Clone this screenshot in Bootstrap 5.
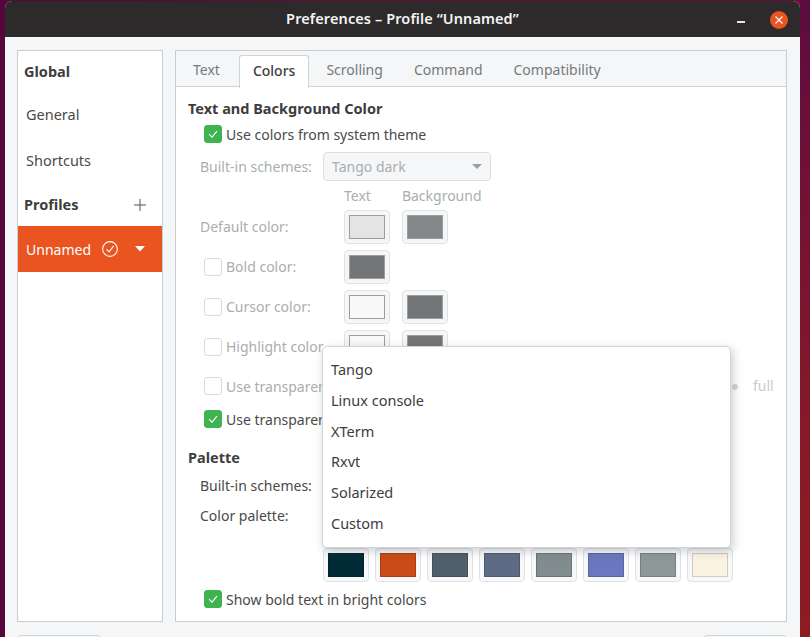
<!DOCTYPE html>
<html lang="en"><head><meta charset="utf-8"><title>Preferences</title>
<link rel="stylesheet" href="https://cdn.jsdelivr.net/npm/bootstrap@5.3.0/dist/css/bootstrap.min.css">
<style>
html,body{height:100%}
body{margin:0;width:810px;height:637px;overflow:hidden;font-family:"Noto Sans","Open Sans",sans-serif;font-size:14px;color:#3d3d3d;background:linear-gradient(90deg,#57063c 0,#57063c 5px,#6a0f38 800px,#7a1430 810px);padding:1px 10px 0 5px}
.rightglow{background:linear-gradient(180deg,#5c0b3f 0,#6e1136 25%,#861a28 70%,#8d1c22 100%);width:10px;height:637px;position:fixed;right:0;top:0}
.win{width:795px;height:700px;background:#f5f6f7;border-radius:7px 7px 0 0;overflow:hidden}
.ttl{height:36px;background:#2c2a2b;color:#f4f4f4;font-weight:600;font-size:14.5px;letter-spacing:.1px}
.ttltxt{width:100%;text-align:center}
.winbtns{position:absolute;right:12px;top:10px}
.closeb{width:18px;height:18px;border-radius:50%;background:#e95420}
.minb{width:8px;height:1.5px;background:#e8e8e8;margin:4px 25px 0 0}
.mainarea{padding:13px 13px 0 12px;gap:12px}
.sidep{width:146px;height:572px;background:#fff;border:1px solid #c9cdd0;flex:none}
.side-h{height:42px;padding-left:6px;font-weight:700;color:#3d3d3d;font-size:14.5px}
.side-first{height:41px}
.side-i{height:46px;padding-left:8px;font-size:14.5px;color:#4a4a4a}
.side-sel{height:46px;background:#e95420;color:#fff;padding-left:8px;font-size:14px}
.ic-circ{margin-left:10px}
.ic-car{margin-left:15px}
.contp{width:612px;height:572px;background:#fff;border:1px solid #c9cdd0;position:relative;flex:none}
.tabrow{height:36px;background:#f5f6f7;border-bottom:1px solid #cfd3d5;padding:4px 0 0 4px;flex-wrap:nowrap}
.tabrow .nav-link{border:0;color:#757a7c;height:32px;padding:0 13px;font-size:14px;line-height:30px;background:transparent;border-radius:0}
.tabrow .nav-item{margin-right:5px}
.tabrow .nav-item:first-child{margin-right:6px}
.tabrow .nav-item:nth-child(2){margin-right:4px}
.tabrow .nav-link.active{background:#fff;color:#3d3d3d;border:1px solid #cfd3d5;border-bottom:0;border-radius:3px 3px 0 0;height:33px;font-weight:500}
.pane{padding-left:12px}
.sect{height:20px;font-weight:700;font-size:14.5px;color:#3d3d3d;line-height:20px}
.chkrow{height:18px;padding-left:16px;gap:4px;white-space:nowrap}
.form-check-input.tick{width:18px;height:18px;margin:0;flex:none;border:1px solid #d8dadc;border-radius:3px;float:none;opacity:1;background-color:#fff}
.form-check-input.tick:checked{background-color:#3eb34f;border-color:#3eb34f;background-size:14px;background-image:url("data:image/svg+xml,%3csvg xmlns='http://www.w3.org/2000/svg' viewBox='0 0 14 14'%3e%3cpath fill='none' stroke='%23fff' stroke-width='1.1' d='M3 7.2l3 3 5-6'/%3e%3c/svg%3e")}
.dimt{color:#a9aeb1}
.normt{color:#4a4a4a}
.lbl{padding-left:12px;width:148px;flex:none;white-space:nowrap;line-height:20px;height:20px}
.chkrow.lbl{padding-left:16px;height:18px}
.combo{width:168px;height:29px;border:1px solid #dcdee0;border-radius:4px;background:#f5f6f7;padding:0 8px;color:#a9aeb1;margin-left:135px}
.caret-d{width:0;height:0;border-left:5px solid transparent;border-right:5px solid transparent;border-top:5px solid #9a9d9f}
.swt{width:46px;height:34px;border:1px solid #e0e2e4;border-radius:4px;background:#f5f6f7;padding:4px;flex:none}
.swt i{display:block;width:100%;height:100%;border:1px solid #9b9d9e}
.swgap{gap:12px;margin-left:8px}
.swp{width:46px;height:34px;border:1px solid #dfe1e3;border-radius:4px;background:#f7f8f9;padding:4px;flex:none}
.swp i{display:block;width:100%;height:100%;border:1px solid rgba(0,0,0,.16)}
.pgap{gap:6px;padding-left:135px}
.m4{margin-top:4px}.m5{margin-top:5px}.m6{margin-top:6px}.m7{margin-top:7px}.m8{margin-top:8px}.m9{margin-top:9px}.m10{margin-top:10px}.m11{margin-top:11px}.m13{margin-top:13px}.m15{margin-top:15px}.m19{margin-top:19px}.m22{margin-top:22px}
.hdr{height:20px;padding-left:156px;gap:31px;line-height:20px}
.fullw{position:absolute;left:577px;top:325px;color:#c8cbcd;line-height:20px}
.sdot{position:absolute;left:556px;top:333px;width:6px;height:6px;border-radius:50%;background:#d5d7d9}
.popup.dropdown-menu{position:absolute;display:block;left:146px;top:295px;width:409px;height:202px;background:#fff;border:1px solid #d2d5d7;border-radius:5px;box-shadow:2px 3px 10px rgba(60,70,80,.28);padding:7px 0 0;margin:0;font-size:14.5px}
.popup .dropdown-item{height:30.8px;line-height:30.8px;padding:0 8px;color:#3d3d3d}
.ftr{padding-top:13px}
.fbtn{width:84px;height:30px;border:1px solid #cfd2d4;background:#f7f8f9;border-radius:4px}
</style></head>
<body>
<div class="rightglow"></div>
<div class="win position-relative">
 <div class="ttl d-flex align-items-center position-relative">
  <div class="ttltxt">Preferences – Profile “Unnamed”</div>
  <div class="winbtns d-flex align-items-center">
   <div class="minb"></div>
   <div class="closeb d-flex align-items-center justify-content-center">
    <svg width="10" height="10" viewBox="0 0 10 10"><path d="M1.5 1.5l7 7M8.5 1.5l-7 7" stroke="#fff" stroke-width="1.2"/></svg>
   </div>
  </div>
 </div>
 <div class="mainarea d-flex">
  <div class="sidep">
   <div class="side-h side-first d-flex align-items-center">Global</div>
   <div class="side-i d-flex align-items-center">General</div>
   <div class="side-i d-flex align-items-center">Shortcuts</div>
   <div class="side-h d-flex align-items-center justify-content-between pe-3">Profiles
    <svg width="12" height="12" viewBox="0 0 12 12"><path d="M6 0v12M0 6h12" stroke="#555" stroke-width="1"/></svg>
   </div>
   <div class="side-sel d-flex align-items-center">Unnamed
    <svg class="ic-circ" width="18" height="18" viewBox="0 0 18 18"><circle cx="9" cy="9" r="7.4" fill="none" stroke="#fff" stroke-width="1.1"/><path d="M5.5 9.2l2.6 2.6 4.6-6" fill="none" stroke="#fff" stroke-width="1.1"/></svg>
    <svg class="ic-car" width="12" height="8" viewBox="0 0 12 8"><path d="M1 1h10L6 6.5z" fill="#fff"/></svg>
   </div>
  </div>
  <div class="contp">
   <ul class="nav tabrow">
    <li class="nav-item"><a class="nav-link" href="#">Text</a></li>
    <li class="nav-item"><a class="nav-link active" href="#">Colors</a></li>
    <li class="nav-item"><a class="nav-link" href="#">Scrolling</a></li>
    <li class="nav-item"><a class="nav-link" href="#">Command</a></li>
    <li class="nav-item"><a class="nav-link" href="#">Compatibility</a></li>
   </ul>
   <div class="pane">
    <div class="sect m11">Text and Background Color</div>
    <div class="chkrow d-flex align-items-center m7 normt"><input class="form-check-input tick" type="checkbox" checked><span>Use colors from system theme</span></div>
    <div class="d-flex align-items-center m9 position-relative">
     <span class="dimt lbl position-absolute">Built-in schemes:</span>
     <div class="combo d-flex align-items-center justify-content-between"><span>Tango dark</span><span class="caret-d"></span></div>
    </div>
    <div class="hdr d-flex dimt m5"><span>Text</span><span>Background</span></div>
    <div class="d-flex align-items-center m4">
     <span class="dimt lbl">Default color:</span>
     <div class="d-flex swgap"><div class="swt"><i style="background:#e4e4e3"></i></div><div class="swt"><i style="background:#838787"></i></div></div>
    </div>
    <div class="d-flex align-items-center m6">
     <div class="chkrow d-flex align-items-center dimt lbl"><input class="form-check-input tick" type="checkbox"><span>Bold color:</span></div>
     <div class="d-flex swgap"><div class="swt"><i style="background:#747576"></i></div></div>
    </div>
    <div class="d-flex align-items-center m6">
     <div class="chkrow d-flex align-items-center dimt lbl"><input class="form-check-input tick" type="checkbox"><span>Cursor color:</span></div>
     <div class="d-flex swgap"><div class="swt"><i style="background:#f8f9f8"></i></div><div class="swt"><i style="background:#747576"></i></div></div>
    </div>
    <div class="d-flex align-items-center m6">
     <div class="chkrow d-flex align-items-center dimt lbl"><input class="form-check-input tick" type="checkbox"><span>Highlight color</span></div>
     <div class="d-flex swgap"><div class="swt"><i style="background:#f8f9f8"></i></div><div class="swt"><i style="background:#747576"></i></div></div>
    </div>
    <div class="chkrow d-flex align-items-center dimt m13"><input class="form-check-input tick" type="checkbox"><span>Use transparen</span></div>
    <div class="chkrow d-flex align-items-center normt m15"><input class="form-check-input tick" type="checkbox" checked><span>Use transparen</span></div>
    <div class="sect m19">Palette</div>
    <div class="normt lbl m9">Built-in schemes:</div>
    <div class="normt lbl m10">Color palette:</div>
    <div class="d-flex pgap m22">
     <div class="swp"><i style="background:#002b36"></i></div>
     <div class="swp"><i style="background:#cb4b16"></i></div>
     <div class="swp"><i style="background:#515f6b"></i></div>
     <div class="swp"><i style="background:#5f6b85"></i></div>
     <div class="swp"><i style="background:#808c8e"></i></div>
     <div class="swp"><i style="background:#6a78bf"></i></div>
     <div class="swp"><i style="background:#8e9899"></i></div>
     <div class="swp"><i style="background:#fbf3e2"></i></div>
    </div>
    <div class="chkrow d-flex align-items-center normt m8"><input class="form-check-input tick" type="checkbox" checked><span>Show bold text in bright colors</span></div>
   </div>
   <span class="sdot"></span>
   <span class="fullw">full</span>
   <div class="popup dropdown-menu">
    <a class="dropdown-item" href="#">Tango</a>
    <a class="dropdown-item" href="#">Linux console</a>
    <a class="dropdown-item" href="#">XTerm</a>
    <a class="dropdown-item" href="#">Rxvt</a>
    <a class="dropdown-item" href="#">Solarized</a>
    <a class="dropdown-item" href="#">Custom</a>
   </div>
  </div>
 </div>
 <div class="ftr d-flex justify-content-between mainarea">
  <button class="fbtn" type="button"></button>
  <button class="fbtn" type="button"></button>
 </div>
</div>
</body></html>
